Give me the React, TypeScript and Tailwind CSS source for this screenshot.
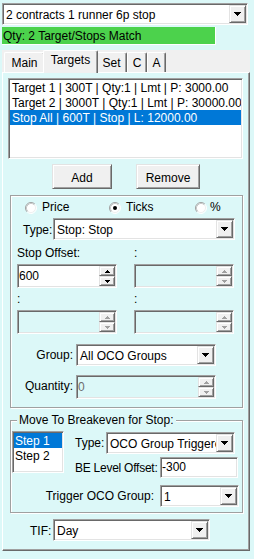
import React from "react";

const sunken =
  "border border-t-[#a0a0a0] border-l-[#a0a0a0] border-r-white border-b-white shadow-[inset_1px_1px_0_#696969,inset_-1px_-1px_0_#e3e3e3] p-[1px]";
const raised =
  "border border-t-[#e3e3e3] border-l-[#e3e3e3] border-r-[#696969] border-b-[#696969] shadow-[inset_1px_1px_0_#ffffff,inset_-1px_-1px_0_#a0a0a0]";
const etched = "border border-[#a0a0a0] shadow-[inset_1px_1px_0_#ffffff,1px_1px_0_#ffffff]";

function DownArrow() {
  return (
    <svg width="7" height="4" viewBox="0 0 7 4" shapeRendering="crispEdges">
      <rect x="0" y="0" width="7" height="1" fill="#000" />
      <rect x="1" y="1" width="5" height="1" fill="#000" />
      <rect x="2" y="2" width="3" height="1" fill="#000" />
      <rect x="3" y="3" width="1" height="1" fill="#000" />
    </svg>
  );
}

function SpinArrow({ up, color }: { up: boolean; color: string }) {
  return up ? (
    <svg width="5" height="3" viewBox="0 0 5 3" shapeRendering="crispEdges">
      <rect x="2" y="0" width="1" height="1" fill={color} />
      <rect x="1" y="1" width="3" height="1" fill={color} />
      <rect x="0" y="2" width="5" height="1" fill={color} />
    </svg>
  ) : (
    <svg width="5" height="3" viewBox="0 0 5 3" shapeRendering="crispEdges">
      <rect x="0" y="0" width="5" height="1" fill={color} />
      <rect x="1" y="1" width="3" height="1" fill={color} />
      <rect x="2" y="2" width="1" height="1" fill={color} />
    </svg>
  );
}

function Combo({ w, text }: { w: string; text: string }) {
  return (
    <div className={`flex h-[22px] shrink-0 bg-white ${sunken} ${w}`}>
      <div className="flex-1 min-w-0 overflow-hidden whitespace-nowrap pl-[2px] pt-[3px] leading-[15px]">
        {text}
      </div>
      <div className={`w-[17px] shrink-0 flex items-center justify-center bg-[#f0f0f0] ${raised}`}>
        <DownArrow />
      </div>
    </div>
  );
}

function Spin({ w, value, disabled }: { w: string; value?: string; disabled?: boolean }) {
  const c = disabled ? "#a0a0a0" : "#000000";
  return (
    <div className={`flex h-[24px] shrink-0 ${disabled ? "bg-[#dcf8f8]" : "bg-white"} ${sunken} ${w}`}>
      <div className={`flex-1 min-w-0 pt-[3px] leading-[15px] ${disabled ? "text-[#6d6d6d]" : ""}`}>{value}</div>
      <div className="w-[16px] shrink-0 flex flex-col">
        <div className={`flex-1 flex items-center justify-center bg-[#f0f0f0] ${raised}`}>
          <SpinArrow up color={c} />
        </div>
        <div className={`flex-1 flex items-center justify-center bg-[#f0f0f0] ${raised}`}>
          <SpinArrow up={false} color={c} />
        </div>
      </div>
    </div>
  );
}

function RadioCircle({ checked }: { checked?: boolean }) {
  return (
    <svg width="12" height="12" viewBox="0 0 12 12" className="shrink-0">
      <circle cx="6" cy="6" r="5" fill="#ffffff" />
      <path d="M2.11 9.89 A5.5 5.5 0 0 1 9.89 2.11" fill="none" stroke="#a0a0a0" />
      <path d="M9.89 2.11 A5.5 5.5 0 0 1 2.11 9.89" fill="none" stroke="#ffffff" />
      <path d="M2.82 9.18 A4.5 4.5 0 0 1 9.18 2.82" fill="none" stroke="#c8c8c8" />
      <path d="M9.18 2.82 A4.5 4.5 0 0 1 2.82 9.18" fill="none" stroke="#f0f0f0" />
      {checked && <circle cx="6" cy="6" r="2" fill="#000000" />}
    </svg>
  );
}

function Tab({ w, label, selected }: { w: string; label: string; selected?: boolean }) {
  return selected ? (
    <div
      className={`relative z-10 -mx-[2px] -mb-[1px] h-[23px] bg-[#f0f0f0] border-l border-t border-white border-r border-r-[#696969] shadow-[inset_-1px_0_0_#a0a0a0] rounded-t-[2px] text-center pt-[2px] leading-[15px] ${w}`}
    >
      {label}
    </div>
  ) : (
    <div
      className={`h-[20px] bg-[#f0f0f0] border-l border-t border-white border-r border-r-[#696969] shadow-[inset_-1px_0_0_#a0a0a0] rounded-t-[2px] text-center pt-[3px] leading-[15px] ${w}`}
    >
      {label}
    </div>
  );
}

function Btn({ w, label }: { w: string; label: string }) {
  return (
    <div className={`h-[25px] bg-[#f0f0f0] ${raised} flex items-center justify-center pt-[3px] leading-[15px] ${w}`}>
      {label}
    </div>
  );
}

export default function App() {
  const items = [
    "Target 1 | 300T | Qty:1 | Lmt | P: 3000.00",
    "Target 2 | 3000T | Qty:1 | Lmt | P: 30000.00",
    "Stop All | 600T | Stop | L: 12000.00",
  ];
  return (
    <div className="w-[254px] h-[559px] bg-[#dcf8f8] overflow-hidden font-['Liberation_Sans',Arial,sans-serif] text-[12px] leading-[15px] text-black flex flex-col pl-[2px] pt-[3px]">
      <Combo w="w-[246px]" text="2 contracts 1 runner 6p stop" />
      <div className="mt-[2px] w-[214px] h-[18px] shrink-0 bg-[#4cd24c] border-r border-b border-white pl-[1px] pt-[2px] leading-[15px] whitespace-nowrap">
        Qty: 2 Target/Stops Match
      </div>

      {/* tab strip */}
      <div className="relative z-10 mt-[5px] w-[248px] h-[22px] shrink-0 bg-[#f0f0f0] flex items-end pl-[2px]">
        <Tab w="w-[41px]" label="Main" />
        <Tab w="w-[55px]" label="Targets" selected />
        <Tab w="w-[31px]" label="Set" />
        <Tab w="w-[20px]" label="C" />
        <Tab w="w-[19px]" label="A" />
      </div>

      {/* tab page */}
      <div className="w-[248px] h-[479px] shrink-0 bg-[#dcf8f8] border border-t-white border-l-white border-r-[#696969] border-b-[#696969] shadow-[inset_-1px_-1px_0_#a0a0a0] flex flex-col">
        <div className={`ml-[5px] mt-[5px] w-[235px] h-[81px] shrink-0 bg-white overflow-hidden ${sunken}`}>
          {items.map((t, i) => (
            <div
              key={i}
              className={`h-[15px] pl-[2px] leading-[17px] whitespace-nowrap overflow-hidden ${
                i === 2 ? "bg-[#0078d7] text-white" : ""
              }`}
            >
              {t}
            </div>
          ))}
        </div>

        <div className="mt-[5px] flex shrink-0">
          <Btn w="ml-[49px] w-[60px]" label="Add" />
          <Btn w="ml-[24px] w-[64px]" label="Remove" />
        </div>

        {/* group box 1 */}
        <div className={`mt-[6px] ml-[7px] w-[233px] h-[213px] shrink-0 ${etched} flex flex-col`}>
          <div className="mt-[4px] ml-[14px] flex h-[15px] items-center">
            <div className="w-[84px] flex items-center">
              <RadioCircle />
              <span className="ml-[5px]">Price</span>
            </div>
            <div className="w-[86px] flex items-center">
              <RadioCircle checked />
              <span className="ml-[5px]">Ticks</span>
            </div>
            <div className="flex items-center">
              <RadioCircle />
              <span className="ml-[3px]">%</span>
            </div>
          </div>

          <div className="mt-[3px] ml-[12px] flex">
            <div className="w-[30px] mt-[5px]">Type:</div>
            <Combo w="w-[182px]" text="Stop: Stop" />
          </div>

          <div className="mt-[6px] ml-[6px] flex h-[15px]">
            <div className="w-[117px]">Stop Offset:</div>
            <div>:</div>
          </div>
          <div className="mt-[3px] ml-[6px] flex gap-[17px]">
            <Spin w="w-[100px]" value="600" />
            <Spin w="w-[100px]" disabled />
          </div>

          <div className="mt-[4px] ml-[6px] flex h-[15px]">
            <div className="w-[117px]">:</div>
            <div>:</div>
          </div>
          <div className="mt-[3px] ml-[6px] flex gap-[17px]">
            <Spin w="w-[100px]" disabled />
            <Spin w="w-[100px]" disabled />
          </div>

          <div className="mt-[10px] flex">
            <div className="w-[62px] mt-[4px] text-right">Group:</div>
            <Combo w="ml-[3px] w-[140px]" text="All OCO Groups" />
          </div>

          <div className="mt-[9px] flex">
            <div className="w-[62px] mt-[4px] text-right">Quantity:</div>
            <Spin w="ml-[3px] w-[140px]" value="0" disabled />
          </div>
        </div>

        {/* group box 2 */}
        <div className={`relative mt-[12px] ml-[7px] w-[233px] h-[93px] shrink-0 ${etched} flex flex-col`}>
          <div className="absolute left-[6px] top-[-8px] px-[2px] bg-[#dcf8f8] leading-[15px] whitespace-nowrap">
            Move To Breakeven for Stop:
          </div>

          <div className="mt-[10px] ml-[1px] flex">
            <div className={`w-[52px] h-[42px] shrink-0 bg-white ${sunken}`}>
              <div className="h-[15px] bg-[#0078d7] text-white pl-[1px] leading-[17px]">Step 1</div>
              <div className="h-[15px] pl-[1px] leading-[17px]">Step 2</div>
            </div>
            <div className="ml-[11px] flex flex-col">
              <div className="mt-[1px] flex">
                <div className="w-[31px] mt-[4px]">Type:</div>
                <Combo w="w-[129px]" text="OCO Group Triggered" />
              </div>
              <div className="mt-[3px] flex">
                <div className="w-[85px] mt-[4px] whitespace-nowrap tracking-[-0.25px]">BE Level Offset:</div>
                <div className={`w-[78px] h-[21px] shrink-0 bg-white ${sunken} pl-[1px] pt-[2px] leading-[15px]`}>
                  -300
                </div>
              </div>
            </div>
          </div>

          <div className="mt-[7px] flex">
            <div className="w-[143px] mt-[4px] text-right whitespace-nowrap">Trigger OCO Group:</div>
            <Combo w="ml-[6px] w-[79px]" text="1" />
          </div>
        </div>

        <div className="mt-[6px] ml-[27px] flex">
          <div className="w-[23px] mt-[5px]">TIF:</div>
          <Combo w="w-[157px]" text="Day" />
        </div>
      </div>
    </div>
  );
}
